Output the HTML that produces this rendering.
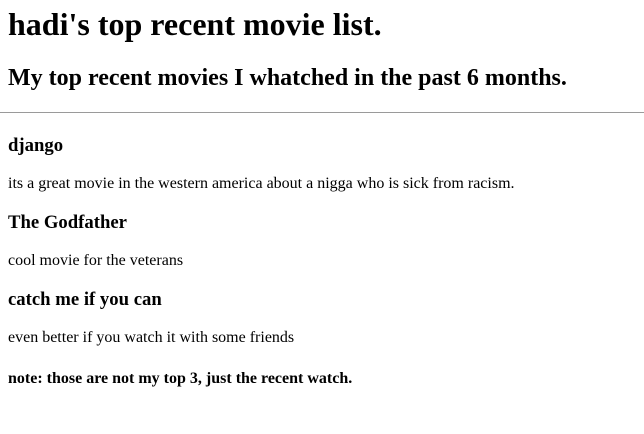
<!DOCTYPE html>
<html>
<head>
<meta charset="utf-8">
<style>
html,body{margin:0;padding:0;background:#fff;}
body{padding:0 8px;font-family:"Liberation Serif","Times New Roman",serif;color:#000;width:628px;height:428px;overflow:hidden;}
h1{font-size:32px;margin:6px 0 21.44px;line-height:37px;}
h2{font-size:24px;margin:21.44px 0 19.92px;line-height:28px;}
hr{margin:0 -8px 0 -8px;border:0;border-top:1px solid #9a9a9a;height:0;}
h3{font-size:18.72px;margin:18.72px 0;line-height:21.5px;}
h3.first{margin-top:21.7px;}
p{font-size:16px;margin:16px 0;line-height:18px;font-family:"Liberation Serif",serif;}
h4{font-size:16px;margin:23.3px 0 21.28px;line-height:18px;}
</style>
</head>
<body>
<h1>hadi's top recent movie list.</h1>
<h2>My top recent movies I whatched in the past 6 months.</h2>
<hr>
<h3 class="first">django</h3>
<p>its a great movie in the western america about a nigga who is sick from racism.</p>
<h3>The Godfather</h3>
<p>cool movie for the veterans</p>
<h3>catch me if you can</h3>
<p>even better if you watch it with some friends</p>
<h4>note: those are not my top 3, just the recent watch.</h4>
</body>
</html>
